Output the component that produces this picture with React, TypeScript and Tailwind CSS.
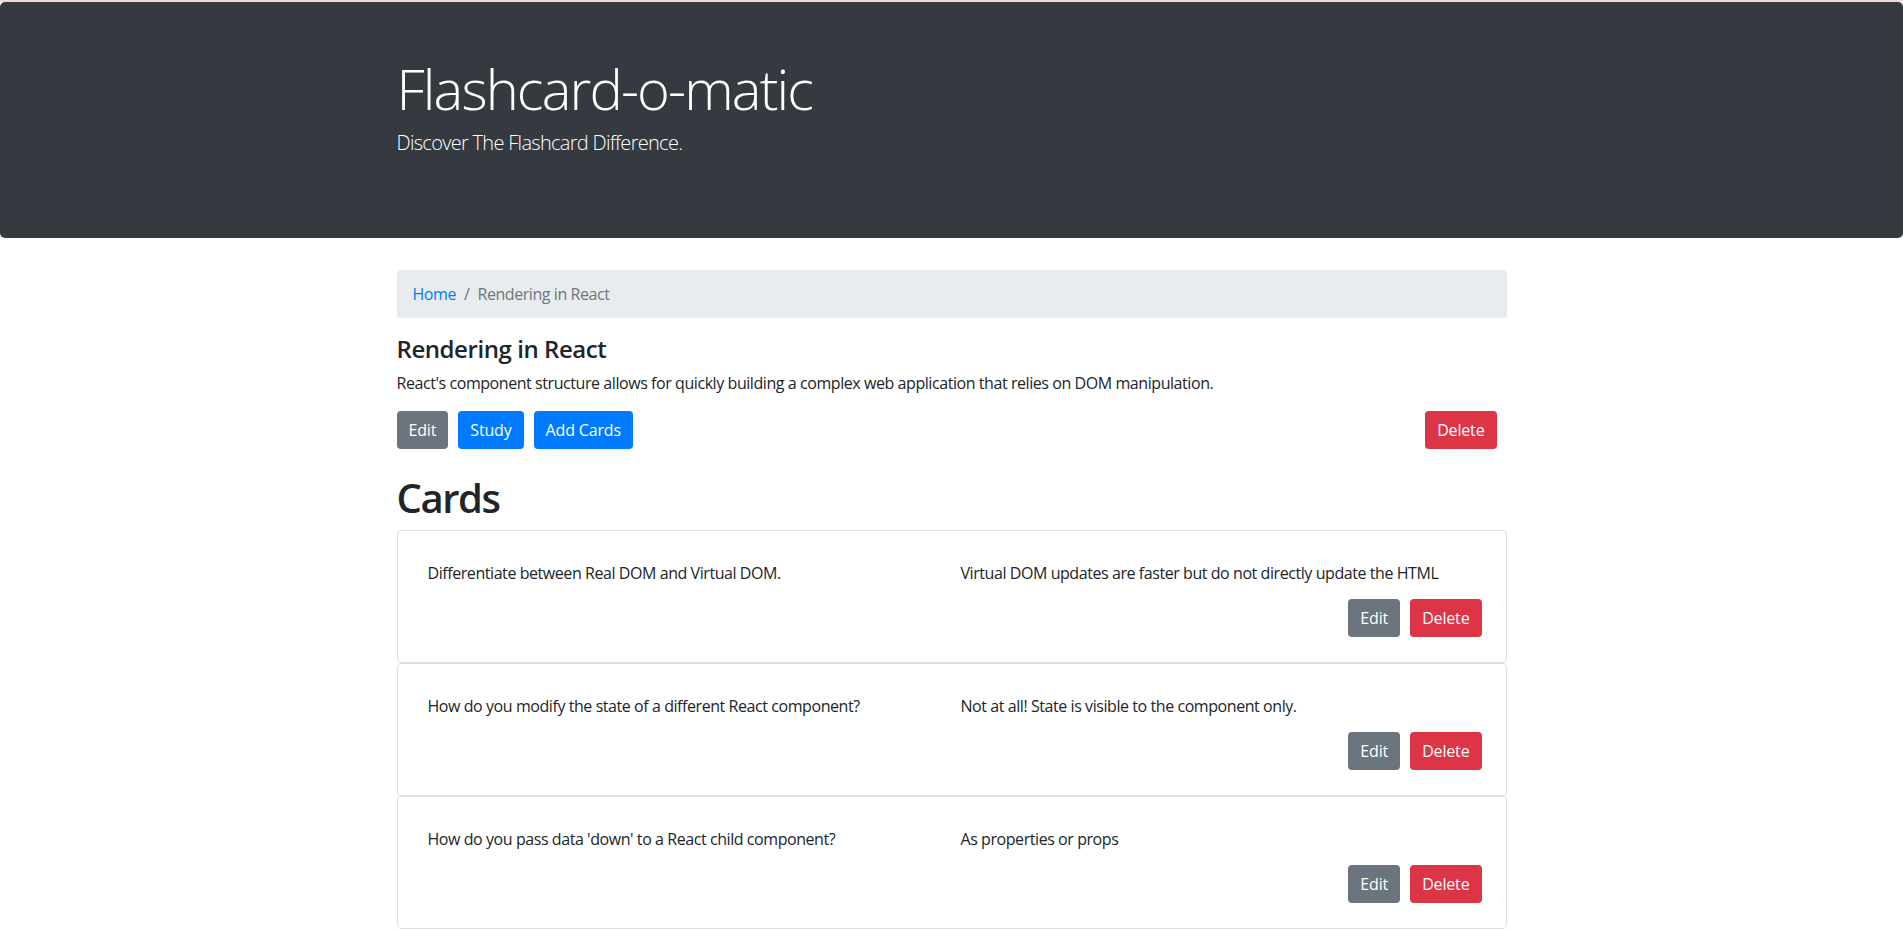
const cards = [
  {
    front: "Differentiate between Real DOM and Virtual DOM.",
    back: "Virtual DOM updates are faster but do not directly update the HTML",
  },
  {
    front: "How do you modify the state of a different React component?",
    back: "Not at all! State is visible to the component only.",
  },
  {
    front: "How do you pass data 'down' to a React child component?",
    back: "As properties or props",
  },
];

const btn = "h-[38px] px-3 rounded-[4px] text-white text-[16px] leading-[24px] tracking-[-0.01em] flex items-center";

export default function App() {
  return (
    <div className="min-h-screen bg-white text-[#212529] font-['Open_Sans',sans-serif] text-[16px] leading-[24px] tracking-[-0.027em]">
      <div className="h-[2px] bg-[#f8d7da]" />
      {/* Jumbotron */}
      <header className="bg-[#343a40] rounded-[5px] h-[236px] pt-[53px]">
        <div className="w-[1110px] mx-auto text-white">
          <h1 className="text-[56px] leading-[67px] font-light tracking-[-0.033em]">Flashcard-o-matic</h1>
          <p className="mt-[6px] text-[20px] leading-[30px] font-light tracking-[-0.035em]">Discover The Flashcard Difference.</p>
        </div>
      </header>

      <main className="w-[1110px] mx-auto mt-8">
        <nav className="h-[48px] bg-[#e9ecef] rounded-[4px] px-4 flex items-center gap-2">
          <a href="#" className="text-[#007bff]">Home</a>
          <span className="text-[#6c757d]">/</span>
          <span className="text-[#6c757d]">Rendering in React</span>
        </nav>

        <h4 className="mt-4 text-[24px] leading-[29px] font-semibold">Rendering in React</h4>
        <p className="mt-2">React's component structure allows for quickly building a complex web application that relies on DOM manipulation.</p>

        <div className="mt-4 flex items-center">
          <div className="flex gap-[10px]">
            <button className={`${btn} bg-[#6c757d]`}>Edit</button>
            <button className={`${btn} bg-[#007bff]`}>Study</button>
            <button className={`${btn} bg-[#007bff]`}>Add Cards</button>
          </div>
          <button className={`${btn} bg-[#dc3545] ml-auto mr-[10px]`}>Delete</button>
        </div>

        <h1 className="mt-[25px] mb-[8px] text-[40px] leading-[48px] font-semibold tracking-[-0.035em]">Cards</h1>

        <div className="flex flex-col">
          {cards.map((c, i) => (
            <div key={i} className="border border-[#dfdfdf] rounded-[4px] pt-[30px] pb-[25px] pl-[30px] pr-[24px]">
              <div className="grid grid-cols-[533px_1fr]">
                <p>{c.front}</p>
                <p>{c.back}</p>
              </div>
              <div className="mt-[14px] flex justify-end gap-[10px]">
                <button className={`${btn} bg-[#6c757d]`}>Edit</button>
                <button className={`${btn} bg-[#dc3545]`}>Delete</button>
              </div>
            </div>
          ))}
        </div>
      </main>
    </div>
  );
}
